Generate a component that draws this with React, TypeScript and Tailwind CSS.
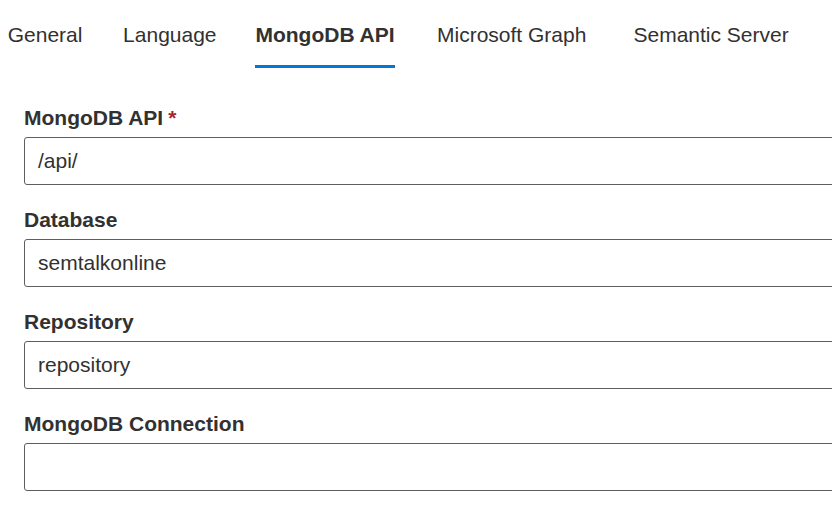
import React from "react";

const tabs = ["General", "Language", "MongoDB API", "Microsoft Graph", "Semantic Server"];
const active = "MongoDB API";

const fields: { label: string; value: string; required?: boolean }[] = [
  { label: "MongoDB API", value: "/api/", required: true },
  { label: "Database", value: "semtalkonline" },
  { label: "Repository", value: "repository" },
  { label: "MongoDB Connection", value: "" },
];

export default function App() {
  return (
    <div className="w-[832px] h-[506px] overflow-hidden bg-white text-[#323130] font-['Liberation_Sans',Arial,sans-serif]">
      <div className="flex h-[68px] -ml-[6px]">
        {tabs.map((t) => {
          const isActive = t === active;
          return (
            <div key={t} className="relative h-full px-3 pt-[2px] mr-3 flex items-center text-[21px]">
              <span className="inline-grid">
                <span className="col-start-1 row-start-1 font-bold invisible whitespace-nowrap">{t}</span>
                <span
                  className={
                    "col-start-1 row-start-1 justify-self-center whitespace-nowrap " +
                    (isActive ? "font-bold" : "font-normal")
                  }
                >
                  {t}
                </span>
              </span>
              {isActive && <div className="absolute bottom-0 left-3 right-3 h-[3px] bg-[#0078d4]" />}
            </div>
          );
        })}
      </div>
      <div className="pl-[24px] pt-[35px]">
        {fields.map((f) => (
          <div key={f.label} className="mb-[20px]">
            <div className="text-[21px] leading-[30px] font-bold pb-[4px] whitespace-nowrap">
              {f.label}
              {f.required && <span className="text-[#a4262c] pl-[5px]">*</span>}
            </div>
            <div className="w-[820px] h-[48px] border border-[#605e5c] rounded-[3px] px-[13px] flex items-center text-[21px]">
              {f.value}
            </div>
          </div>
        ))}
      </div>
    </div>
  );
}
